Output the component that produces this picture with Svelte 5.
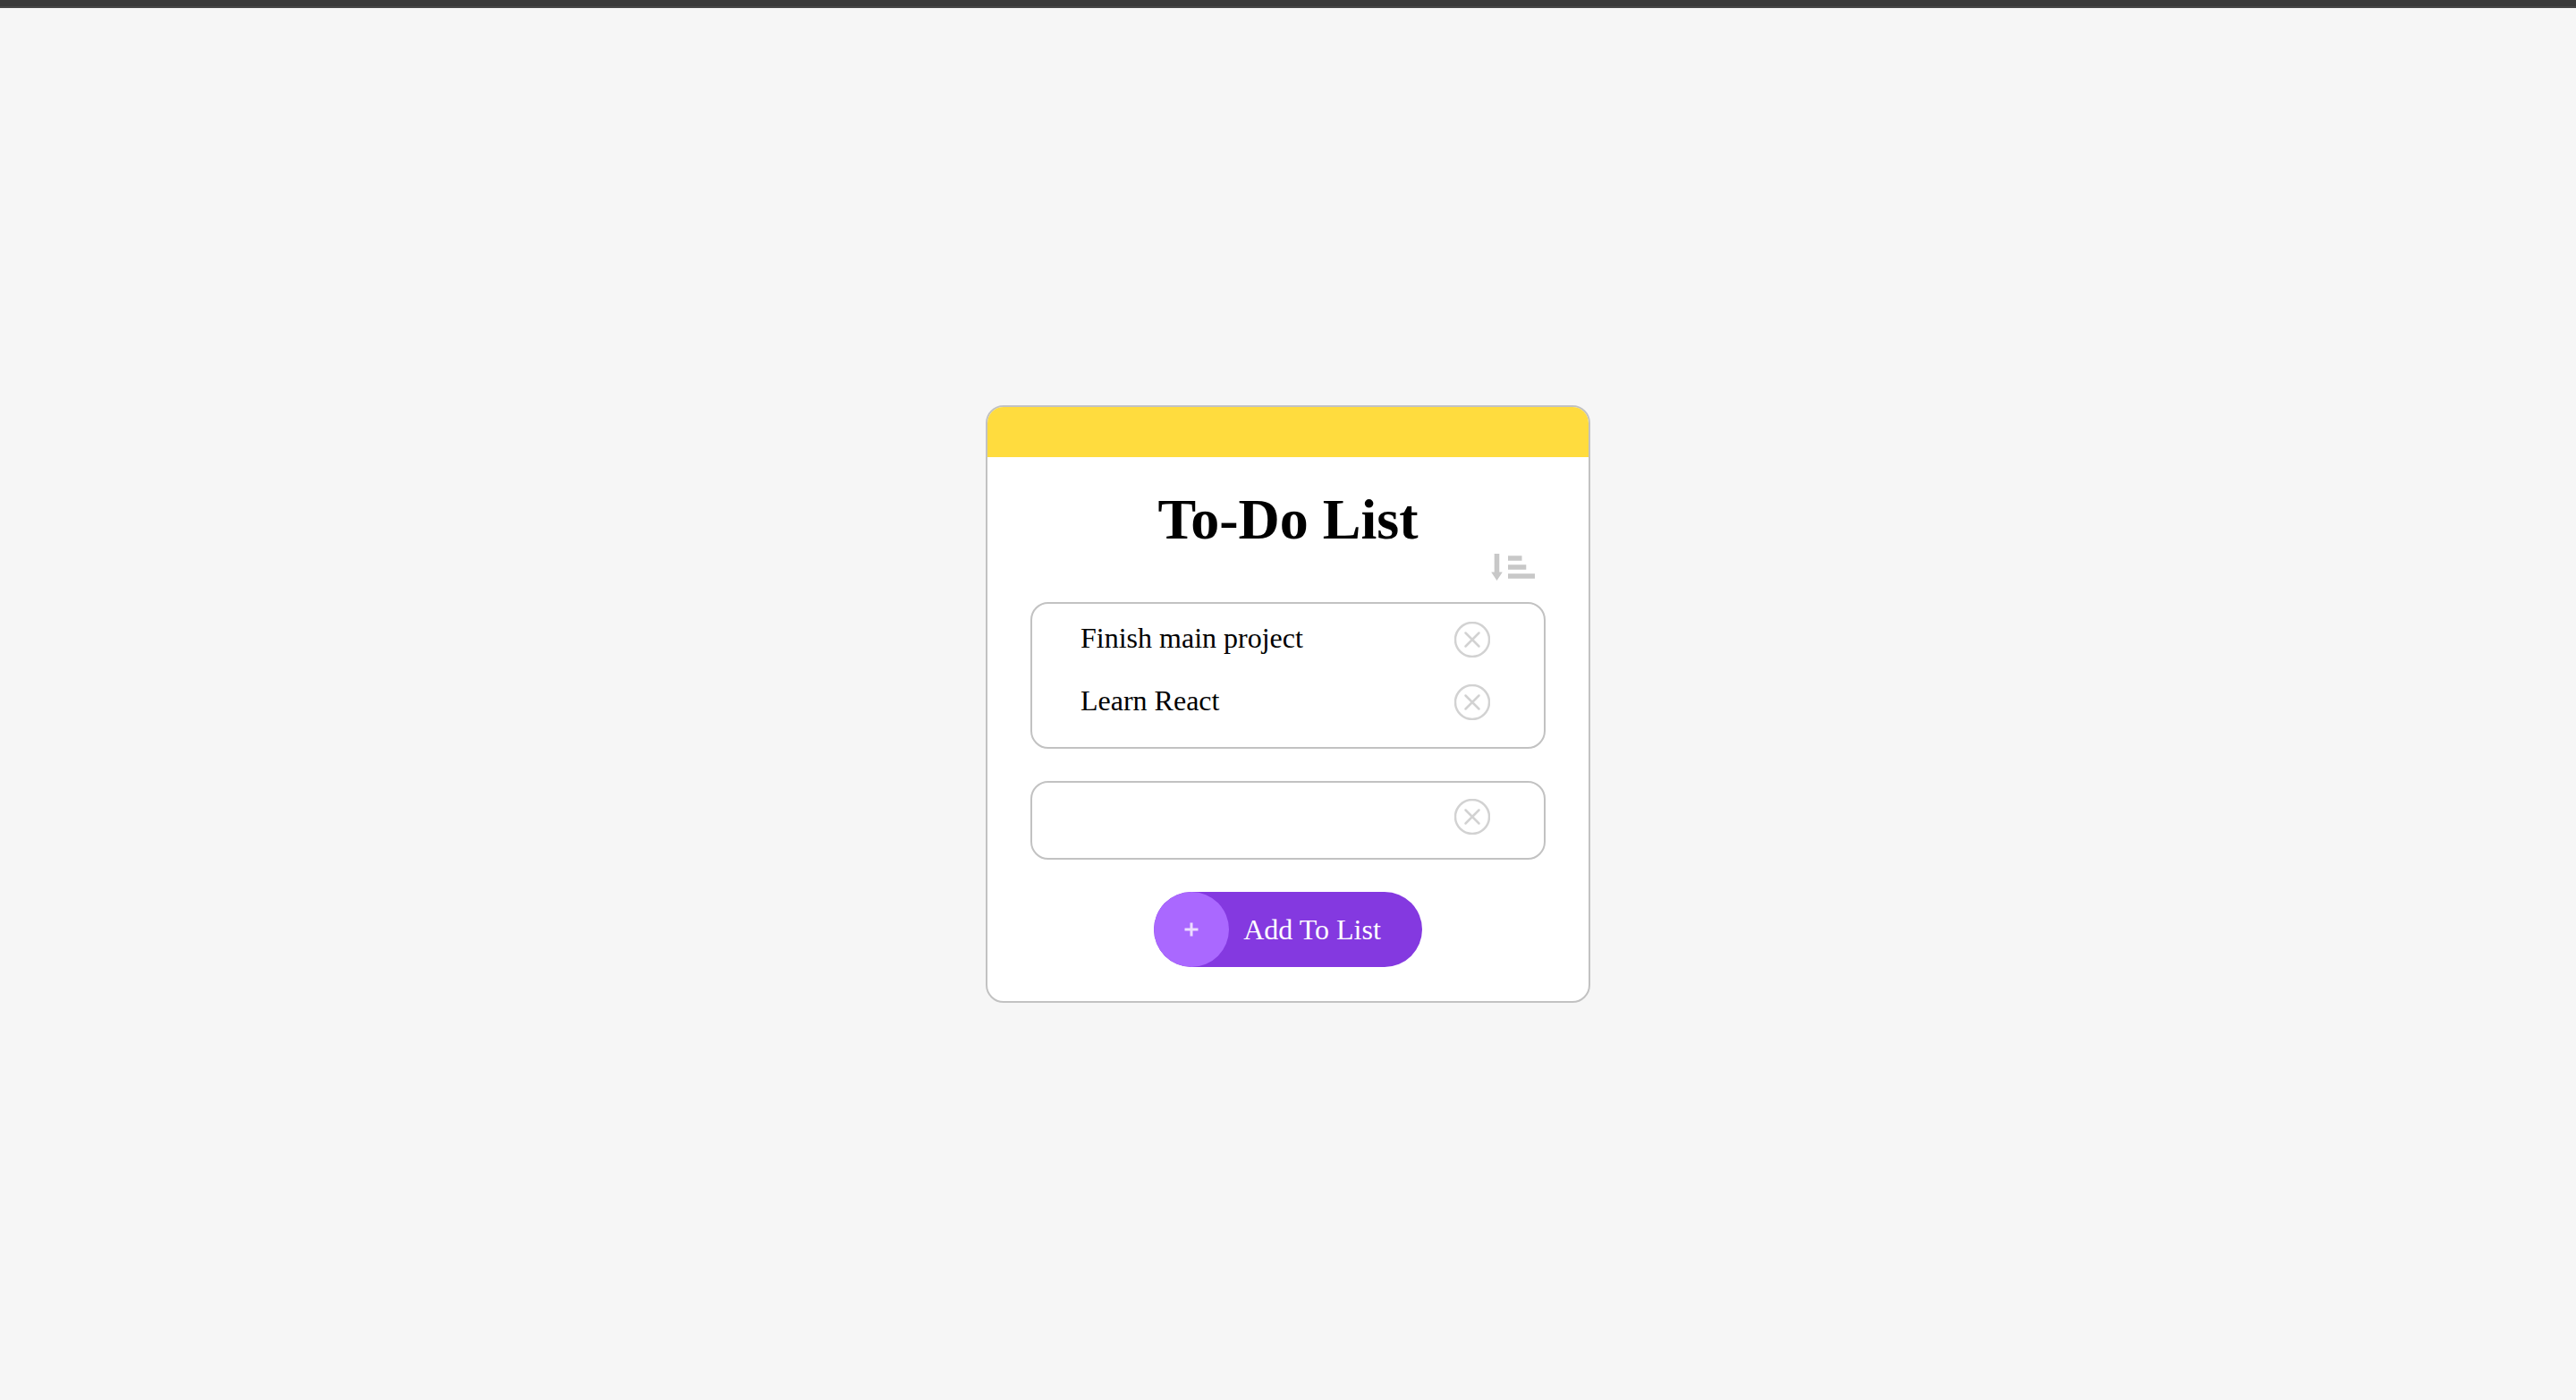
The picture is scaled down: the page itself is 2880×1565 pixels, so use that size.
<script>
  let tasks = $state([
    { id: 1, title: 'Finish main project' },
    { id: 2, title: 'Learn React' }
  ]);
  let draft = $state('');
  let nextId = 3;
  let descending = false;

  function addTask(event) {
    event.preventDefault();
    const title = draft.trim();
    if (!title) return;
    tasks.push({ id: nextId++, title });
    draft = '';
  }

  function removeTask(id) {
    tasks = tasks.filter((task) => task.id !== id);
  }

  function sortTasks() {
    const direction = descending ? -1 : 1;
    tasks = [...tasks].sort((a, b) => direction * a.title.localeCompare(b.title));
    descending = !descending;
  }
</script>

{#snippet cross()}
  <svg viewBox="0 0 40 40" aria-hidden="true">
    <circle cx="20" cy="20" r="19" />
    <path d="M12.5 12.5 27.5 27.5M27.5 12.5 12.5 27.5" />
  </svg>
{/snippet}

<div class="page">
  <main>
    <section class="card">
      <div class="band"></div>
      <div class="content">
        <h1>To-Do List</h1>

        <button class="icon sort" type="button" aria-label="Sort tasks" onclick={sortTasks}>
          <svg viewBox="0 0 50 30" aria-hidden="true">
            <path d="M3.700 0h5.600v20.500h3.500L6.500 30 .2 20.500h3.500zM19 2.200h15.500v5.600H19zM19 12.200h20.300v5.600H19zM19 22.200h30v5.600H19z" />
          </svg>
        </button>

        <ul class="box tasks">
          {#each tasks as task (task.id)}
            <li>
              <span>{task.title}</span>
              <button class="icon clear" type="button" aria-label={`Delete ${task.title}`} onclick={() => removeTask(task.id)}>
                {@render cross()}
              </button>
            </li>
          {/each}
        </ul>

        <form onsubmit={addTask}>
          <div class="box entry">
            <input type="text" aria-label="New task" bind:value={draft} />
            <button class="icon clear" type="button" aria-label="Clear new task" onclick={() => (draft = '')}>
              {@render cross()}
            </button>
          </div>

          <button class="add" type="submit">
            <span class="plus">
              <svg viewBox="0 0 16 16" aria-hidden="true"><path d="M8 .5v15M.5 8h15" /></svg>
            </span>
            <span class="label">Add To List</span>
          </button>
        </form>
      </div>
    </section>
  </main>
</div>

<style>
  :global(body) {
    margin: 0;
    background: #f6f6f6;
  }

  .page {
    box-sizing: border-box;
    min-height: 100vh;
    display: flex;
    flex-direction: column;
    color: #000;
    font-family: 'Liberation Serif', 'Times New Roman', serif;
    font-size: 32px;
    line-height: 36px;
  }

  .page::before {
    content: '';
    height: 7px;
    background: #3b3b3b;
    border-bottom: 2px solid #474747;
  }

  main {
    flex: 1;
    display: flex;
    align-items: center;
    justify-content: center;
  }

  .card {
    box-sizing: border-box;
    width: 100%;
    max-width: 676px;
    overflow: hidden;
    background: #fff;
    border: 2px solid #c2c2c2;
    border-radius: 20px;
  }

  .band {
    height: 56px;
    background: #ffdc3e;
  }

  .content {
    display: flex;
    flex-direction: column;
    padding: 34px 48px 38px;
  }

  h1 {
    margin: 0;
    font-size: 64px;
    line-height: 72px;
    text-align: center;
  }

  button {
    padding: 0;
    border: 0;
    background: none;
    font: inherit;
    cursor: pointer;
  }

  .icon {
    flex: none;
  }

  svg {
    display: block;
    width: 100%;
    height: 100%;
  }

  .sort {
    align-self: flex-end;
    width: 50px;
    height: 30px;
    margin: 2px 11px 24px;
  }

  .sort path {
    fill: #c8c8c8;
  }

  .clear {
    width: 40px;
    height: 40px;
  }

  .clear svg {
    fill: none;
    stroke: #d2d2d2;
    stroke-width: 2.500;
    stroke-linecap: round;
  }

  .box {
    border: 2px solid #c2c2c2;
    border-radius: 20px;
  }

  .tasks {
    display: flex;
    flex-direction: column;
    gap: 30px;
    margin: 0;
    padding: 20px 60px 30px 54px;
    list-style: none;
  }

  li {
    display: flex;
    align-items: flex-start;
    justify-content: space-between;
  }

  form {
    display: flex;
    flex-direction: column;
    gap: 36px;
    margin-top: 36px;
  }

  .entry {
    display: flex;
    padding: 18px 60px 26px 54px;
  }

  input {
    flex: 1;
    min-width: 0;
    padding: 0;
    border: 0;
    outline: 0;
    background: none;
    color: inherit;
    font: inherit;
  }

  .add {
    align-self: center;
    display: flex;
    align-items: center;
    overflow: hidden;
    border-radius: 42px;
    background: #8439e0;
    color: #fff;
  }

  .plus {
    display: grid;
    place-items: center;
    width: 84px;
    height: 84px;
    border-radius: 50%;
    background: #aa68ff;
  }

  .plus svg {
    width: 16px;
    height: 16px;
    fill: none;
    stroke: #ecdcff;
    stroke-width: 3;
  }

  .label {
    padding: 0 46px 0 16px;
  }
</style>
